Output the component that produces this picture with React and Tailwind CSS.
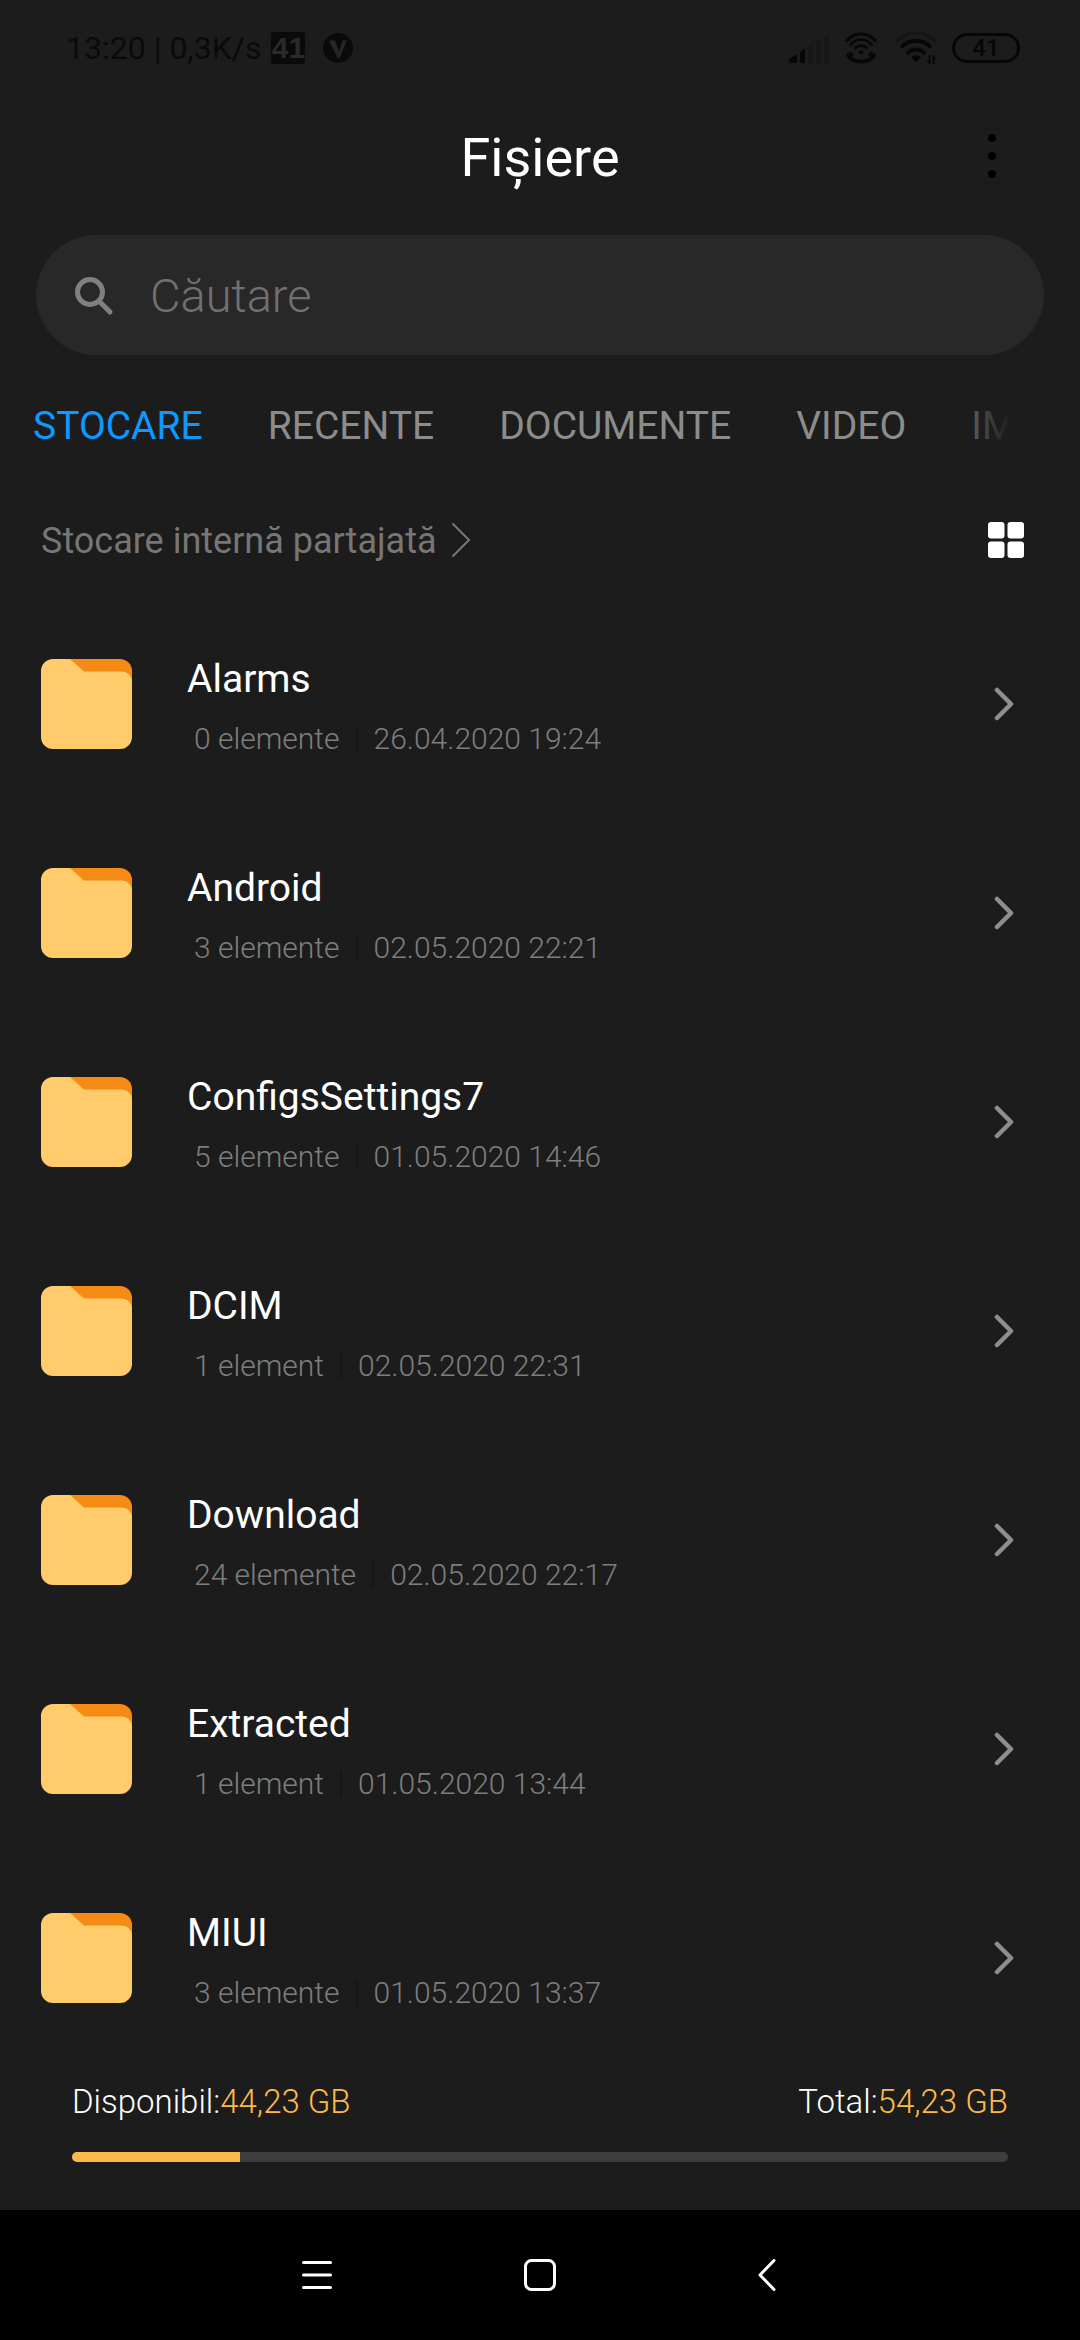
import React, { useState } from 'react';

const TABS = ['STOCARE', 'RECENTE', 'DOCUMENTE', 'VIDEO', 'IMAGINI'];

const FOLDERS = [
  { name: 'Alarms', count: 0, date: '26.04.2020 19:24' },
  { name: 'Android', count: 3, date: '02.05.2020 22:21' },
  { name: 'ConfigsSettings7', count: 5, date: '01.05.2020 14:46' },
  { name: 'DCIM', count: 1, date: '02.05.2020 22:31' },
  { name: 'Download', count: 24, date: '02.05.2020 22:17' },
  { name: 'Extracted', count: 1, date: '01.05.2020 13:44' },
  { name: 'MIUI', count: 3, date: '01.05.2020 13:37' },
];

const STORAGE = { free: 44.23, total: 54.23 };

function formatGb(value) {
  return `${value.toFixed(2).replace('.', ',')} GB`;
}

function SignalIcon() {
  return (
    <svg className="w-10 h-[30px]" viewBox="0 0 40 30">
      <path d="M0 28v-2l8-5v9H2a2 2 0 0 1-2-2zM11 19l5-3.500V30h-4a1 1 0 0 1-1-1z" fill="#070707" />
      <path d="M19 14l5-3.500V30h-5zM27 9l5-3.500V30h-5zM35 3.500l5-3V30h-5z" fill="#171717" />
    </svg>
  );
}

function WifiCallIcon() {
  return (
    <svg className="w-8 h-8" viewBox="0 0 32 32" fill="none" stroke="#070707">
      <path d="M1 9.500C9-.5 23-.5 31 9.500" strokeWidth="3" />
      <path d="M5 13.500C11 5.500 21 5.500 27 13.500" strokeWidth="2.600" />
      <path d="M9.500 17C13 12.500 19 12.500 22.500 17" strokeWidth="2.600" />
      <path d="M16 23l-3-3.500c2-1.500 4-1.500 6 0z" fill="#070707" stroke="none" />
      <path d="M1 22l5-2.500 3 3.500-2 2c5 3.500 13 3.500 18 0l-2-2 3-3.500 5 2.500c0 3-2 5-4 6.500-6 4-16 4-22 0C3 27 1 25 1 22z" fill="#070707" stroke="none" />
    </svg>
  );
}

function WifiIcon() {
  return (
    <svg className="w-[42px] h-8" viewBox="0 0 42 32" fill="none">
      <path d="M1 10C12-2 30-2 41 10" stroke="#151515" strokeWidth="3" />
      <path d="M6 15.500C14 6.500 28 6.500 36 15.500" stroke="#070707" strokeWidth="4" />
      <path d="M12 22c5-6 13-6 18 0" stroke="#070707" strokeWidth="4" />
      <path d="M21 30l-5-4.500c3-3 7-3 10 0z" fill="#070707" />
      <path d="M34.500 32v-9M38.500 23v9" stroke="#070707" strokeWidth="2" />
      <path d="M31 28h4v4zM42 27h-4v-4z" fill="#070707" />
    </svg>
  );
}

function StatusBar() {
  return (
    <div className="flex h-24 items-center justify-between pl-[66px] pr-[60px] text-[#0a0a0a]">
      <div className="flex items-center">
        <span className="text-[32px] leading-10">13:20 | 0,3K/s</span>
        <span className="ml-2.5 flex h-8 w-[34px] items-center justify-center rounded-xs bg-[#0a0a0a] font-['Liberation_Sans',sans-serif] text-[30px] leading-8 font-bold text-[#2a2a2a]">
          41
        </span>
        <svg className="ml-[18px] h-[30px] w-[30px]" viewBox="0 0 30 30">
          <circle cx="15" cy="15" r="15" fill="#0a0a0a" />
          <path d="M6 7.500h6l4 11 3.500-11H24L16.500 25h-2z" fill="#262626" />
        </svg>
      </div>
      <div className="flex items-center">
        <SignalIcon />
        <span className="ml-4"><WifiCallIcon /></span>
        <span className="ml-[18px]"><WifiIcon /></span>
        <span className="ml-[15px] flex h-[30px] w-[68px] items-center justify-center rounded-full border-3 border-[#070707] text-2xl font-medium text-[#070707]">
          41
        </span>
      </div>
    </div>
  );
}

function FolderIcon() {
  return (
    <svg className="h-[90px] w-[91px] shrink-0" viewBox="0 0 91 90">
      <path d="M20 0h59a12 12 0 0 1 12 12v18H20z" fill="#f58b14" />
      <path d="M12 0h17l14 12.500h38a10 10 0 0 1 10 10V78a12 12 0 0 1-12 12H12A12 12 0 0 1 0 78V12A12 12 0 0 1 12 0z" fill="#ffcb6b" />
    </svg>
  );
}

function FolderRow({ folder }) {
  return (
    <li>
      <button className="flex h-[209px] w-full items-center pl-[41px] pr-[66px] text-left">
        <FolderIcon />
        <div className="ml-[55px] flex-1">
          <p className="text-[39px] leading-14 text-white">{folder.name}</p>
          <p className="mt-3.5 flex items-center pl-[7px] text-[30px] leading-9 font-light text-[#7e7e7e]">
            <span>{folder.count} {folder.count === 1 ? 'element' : 'elemente'}</span>
            <span className="mx-4 h-[26px] w-[2px] bg-[#161616]" />
            <span>{folder.date}</span>
          </p>
        </div>
        <svg className="h-[34px] w-5" viewBox="0 0 20 34" fill="none" stroke="#8e8e8e" strokeWidth="4.500" strokeLinecap="round" strokeLinejoin="round">
          <path d="M3 3l14 14L3 31" />
        </svg>
      </button>
    </li>
  );
}

function StorageFooter({ free, total }) {
  const usedPercent = Math.floor(((total - free) / total) * 100);
  return (
    <footer className="px-[72px] pt-5 pb-12">
      <div className="flex justify-between text-[33px] leading-10 font-light text-white">
        <p>Disponibil:<span className="text-[#fcba4b]">{formatGb(free)}</span></p>
        <p>Total:<span className="text-[#fcba4b]">{formatGb(total)}</span></p>
      </div>
      <div className="mt-[30px] h-2.5 overflow-hidden rounded-full bg-[#3d3d3d]">
        <div className="h-full bg-[#fcba4b]" style={{ width: `${usedPercent}%` }} />
      </div>
    </footer>
  );
}

function SystemNav() {
  return (
    <nav className="flex h-[130px] items-center justify-center gap-[183px] bg-black">
      <button aria-label="Recente" className="flex w-10 justify-center">
        <svg className="h-8 w-8" viewBox="0 0 32 32" stroke="#fff" strokeWidth="3" strokeLinecap="round">
          <path d="M2.500 3.500h27M2.500 16h27M2.500 28.500h27" />
        </svg>
      </button>
      <button aria-label="Acasă" className="flex w-10 justify-center">
        <svg className="h-8 w-8" viewBox="0 0 32 32" fill="none" stroke="#fff" strokeWidth="3">
          <rect x="1.500" y="1.500" width="29" height="29" rx="6" />
        </svg>
      </button>
      <button aria-label="Înapoi" className="flex w-10 justify-center">
        <svg className="h-8 w-8" viewBox="0 0 32 32" fill="none" stroke="#fff" strokeWidth="3" strokeLinecap="round" strokeLinejoin="round">
          <path d="M27 1.500L13 16l14 14.500" />
        </svg>
      </button>
    </nav>
  );
}

export default function App() {
  const [tab, setTab] = useState('STOCARE');
  const [query, setQuery] = useState('');

  const visible = FOLDERS.filter((f) => f.name.toLowerCase().includes(query.toLowerCase()));

  return (
    <div className="flex min-h-screen flex-col bg-[#1c1c1c] font-[Roboto,sans-serif]">
      <StatusBar />

      <header className="grid h-[123px] grid-cols-[1fr_auto_1fr] items-center">
        <h1 className="col-start-2 text-[54px] leading-16 text-white">Fișiere</h1>
        <button aria-label="Mai multe" className="mr-[72px] justify-self-end">
          <svg className="h-12 w-8" viewBox="0 0 32 48" fill="#000">
            <circle cx="16" cy="4" r="4" />
            <circle cx="16" cy="22" r="4" />
            <circle cx="16" cy="40" r="4" />
          </svg>
        </button>
      </header>

      <label className="mx-9 mt-4 flex h-[120px] items-center rounded-full bg-[#282828] pt-0.5 pl-[38px]">
        <svg className="h-10 w-10" viewBox="0 0 40 40" fill="none" stroke="#808080" strokeWidth="5" strokeLinecap="round">
          <circle cx="16" cy="16" r="12.500" />
          <path d="M25.500 25.500L36 36" />
        </svg>
        <input
          type="text"
          aria-label="Căutare"
          placeholder="Căutare"
          value={query}
          onChange={(e) => setQuery(e.target.value)}
          className="ml-9 min-w-0 flex-1 bg-transparent text-[47px] leading-14 font-light text-white outline-none placeholder:text-[#707070]"
        />
      </label>

      <div className="relative">
        <nav className="flex h-[140px] items-center gap-[65px] overflow-x-auto pt-0.5 pl-[33px] [scrollbar-width:none]">
          {TABS.map((name) => (
            <button
              key={name}
              onClick={() => setTab(name)}
              className={`shrink-0 text-[39px] leading-12 ${tab === name ? 'text-[#0d99ff]' : 'text-[#8c8c8c]'}`}
            >
              {name}
            </button>
          ))}
        </nav>
        {/* fade over the tabs that run off the edge */}
        <div className="pointer-events-none absolute inset-y-4 right-0 w-[140px] bg-linear-to-r from-transparent to-[#1d1d1d] to-50%" />
      </div>

      <div className="flex h-[90px] items-center justify-between pl-[41px] pr-14">
        <a href="#" className="flex items-center text-[36px] leading-11 text-[#767676]">
          <span className="pt-0.5">Stocare internă partajată</span>
          <svg className="ml-3.5 h-9 w-5" viewBox="0 0 20 36" fill="none" stroke="#767676" strokeWidth="2" strokeLinecap="round">
            <path d="M2 2l16 16L2 34" />
          </svg>
        </a>
        <button aria-label="Grilă">
          <svg className="h-9 w-9" viewBox="0 0 36 36" fill="#fff">
            <rect width="16.500" height="16.500" rx="3" />
            <rect x="19.500" width="16.500" height="16.500" rx="3" />
            <rect y="19.500" width="16.500" height="16.500" rx="3" />
            <rect x="19.500" y="19.500" width="16.500" height="16.500" rx="3" />
          </svg>
        </button>
      </div>

      <ul className="flex-1 pt-3.5">
        {visible.map((folder) => (
          <FolderRow key={folder.name} folder={folder} />
        ))}
      </ul>

      <StorageFooter free={STORAGE.free} total={STORAGE.total} />
      <SystemNav />
    </div>
  );
}
